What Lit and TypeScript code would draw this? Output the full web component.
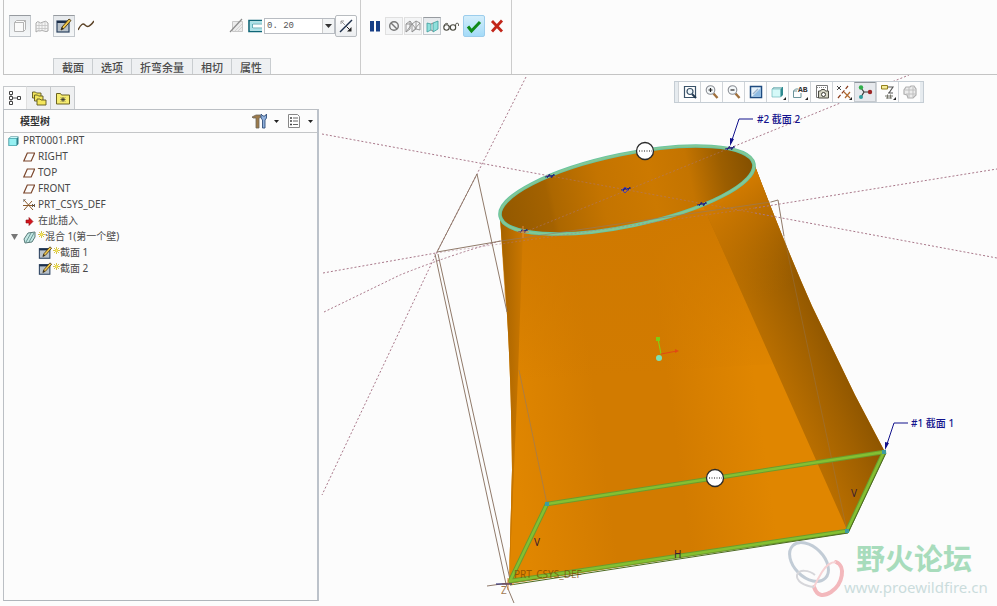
import { LitElement, html, svg, css, type TemplateResult } from "lit";
import { customElement, state } from "lit/decorators.js";
import { classMap } from "lit/directives/class-map.js";

const icon = (body: unknown, w = 16, h = 16) => html`<svg width=${w} height=${h} viewBox="0 0 ${w} ${h}" aria-hidden="true">${body}</svg>`;

const sketchShape = svg`<rect x="1" y="3" width="12" height="11" fill="#b9c2ca" stroke="#2b4260" stroke-width="1.200"/><path d="M1 4h12" stroke="#1c2f4a" stroke-width="2"/><path d="M5 12l1-3 7-8 2 1.500-7 8z" fill="#f2c94a" stroke="#4a3510" stroke-width=".9"/><path d="M5 12l1-3 1.500 1.500z" fill="#222"/>`;
const magnifier = svg`<path d="M9.500 9.500l4 4.500" stroke="#a0703c" stroke-width="2.400"/><circle cx="6.500" cy="6" r="4.300" fill="#f4f8fa" stroke="#8b8f95" stroke-width="1.100"/>`;
const moreMark = svg`<path d="M16 13v3h-3z" fill="#222"/>`;

const icons = {
  solid: icon(svg`<path d="M2.500 4.500h9v9h-9zM2.500 4.500l2-2h9v9l-2 2M11.500 4.500l2-2" fill="#fafafa" stroke="#b4b4b4"/>`),
  surface: icon(svg`<path d="M2 14V5q1-2 3-1 1 2 4 0t5 1v8q-2 1-4 0t-4 0q-2-1-4 1z" fill="#f5f5f5" stroke="#aaa"/><path d="M5 4v8M8 5v8M11 4v8M2 7.500h12M2 10.500h12" stroke="#c4c4c4" stroke-width=".8"/>`),
  sketch: icon(sketchShape),
  curve: icon(svg`<path d="M0 12c3-6 5-7 7-5s4 3 9-4" fill="none" stroke="#5b4226" stroke-width="1.400"/>`),
  hatch: icon(svg`<path d="M3.500 3.500h10v10h-10z" fill="#ececec" stroke="#c8c8c8"/><path d="M6 13l7-7M9 13l4-4" stroke="#d2d2d2"/><path d="M1 14L13 1" stroke="#8c8c8c" stroke-width="1.200"/>`),
  channel: icon(svg`<path d="M15 2.500H2v11H15" fill="#fff" stroke="#0f6677" stroke-width="1.600"/><path d="M15 4.500H4v7H15" fill="none" stroke="#a8e3ea" stroke-width="2"/><path d="M15 6H5.500v4H15" fill="#fff" stroke="#3f98a4" stroke-width=".8"/>`),
  flip: icon(svg`<path d="M2 14L14 2" stroke="#1c2f4a" stroke-width="1.500"/><path d="M3 3l4 4M3 6V3h3" stroke="#999" fill="none"/><path d="M8.500 8.500l4 4" stroke="#222"/><path d="M13.500 9v4.500H9z" fill="#222"/>`),
  pause: icon(svg`<path d="M3 3h4v10.500H3zM9 3h4v10.500H9z" fill="#173f86"/>`),
  none: icon(svg`<circle cx="8" cy="8" r="4.300" fill="none" stroke="#777" stroke-width="1.400"/><path d="M5 5l6 6" stroke="#777" stroke-width="1.400"/>`),
  attach: icon(svg`<path d="M1 6l4-3v8l-4 3zM7 6l4-3v8l-4 3zM11 3l4 2v7l-4-1M1 6l6 0M5 3l6 8M1 14l6-8M7 14l8-9" fill="none" stroke="#8f8f8f" stroke-width=".9"/>`),
  preview: icon(svg`<path d="M3 5l4 1v6l-4 2zM9 5l5-2v8l-5 3z" fill="#8fe0dc" stroke="#3c9c9c" stroke-width=".8"/><path d="M7 6l2-1M7 12l2 1" stroke="#888"/>`),
  glasses: icon(svg`<circle cx="3.500" cy="9.500" r="2.700" fill="none" stroke="#4a4a40" stroke-width="1.100"/><circle cx="10" cy="9.500" r="2.700" fill="none" stroke="#4a4a40" stroke-width="1.100"/><path d="M6 9q1-1 1.500 0M1 8.500Q2 4 5 6M12.500 8.500q0-5 3.200-2.500v2" fill="none" stroke="#4a4a40"/>`),
  accept: icon(svg`<path d="M2 8.500l3.500 4.500L14 4" fill="none" stroke="#0f8a18" stroke-width="3"/>`),
  cancel: icon(svg`<path d="M3 3l10 10.500M13 2.500L3 13.500" stroke="#c2261a" stroke-width="2.800"/>`),
  treeTab: icon(svg`<path d="M4 4v8M6 8h5" stroke="#555"/><g fill="#fff" stroke="#444"><path d="M2.500 1.500h3v3h-3zM2.500 6.500h3v3h-3zM2.500 11.500h3v3h-3zM10.500 6.500h3v3h-3z"/></g>`),
  folders: icon(svg`<g fill="#f3e65c" stroke="#5c5620" stroke-width=".9"><path d="M1.500 2h3l1 1H10v5H1.500z"/><path d="M3.500 5h3l1 1H12v5H3.500z"/><path d="M6 9h3l1 1h5v5H6z"/></g>`),
  favorite: icon(svg`<path d="M1.500 3.500h4l1 1.500H14.500v9h-13z" fill="#f6ec70" stroke="#6b6322"/><path d="M8 7v5M5.500 9.500h5M6 7.500l4 4M10 7.500l-4 4" stroke="#333" stroke-width=".8"/>`),
  settings: icon(svg`<path d="M0 4l4-2h4l1 2-2 1v10H4V5H1z" fill="#9c7a4a" stroke="#6d675c" stroke-width=".8"/><path d="M10.500 15V7L9 5V1l2 2h2l1.500-2v4L13 7v8z" fill="#8fb0dc" stroke="#33507c" stroke-width=".9"/>`),
  list: icon(svg`<path d="M2.500 1.500h9l2 2v11h-11z" fill="#fff" stroke="#888"/><path d="M7 5h5M7 8h5M7 11.500h5" stroke="#666"/><path d="M4 5h2M4 8h2M4 11.500h2" stroke="#444" stroke-width="1.500"/>`),
  part: icon(svg`<path d="M.5 3.500l2-2h8v7.500l-2 2h-8z" fill="#2e7f88"/><path d="M1 3.500h7.500v7H1z" fill="#96f0f2" stroke="#5bb4bb" stroke-width=".7"/><path d="M1.500 3l1.200-1H10l-1 1z" fill="#c9f8f8"/>`, 12, 12),
  plane: icon(svg`<path d="M.8 10h7.400l3.500-8H4.300z" fill="none" stroke="#7a452a" stroke-width="1.200"/>`, 12, 12),
  csys: icon(svg`<path d="M0 6.500h12M1 1l9 10M1 11l8-9" stroke="#8a5a2c"/><path d="M0 0v3M1 0l2 0M9 5l3 3M9 8l3-3" stroke="#333" stroke-width=".8"/>`, 13, 12),
  insert: icon(svg`<path d="M3 5h3V2.500l4 4-4 4V8H3z" fill="#d4141c" stroke="#8c0a10" stroke-width=".6"/>`, 12, 12),
  blend: icon(svg`<path d="M1 8l4-6 7-1v5l-3 5-7 1z" fill="#c4e8e4" stroke="#587a78"/><path d="M3 11l5-9M6 11l5-9" stroke="#5c8c8a" stroke-width=".9"/>`, 13, 13),
  star: icon(svg`<path d="M3.500 0v7M0 3.500h7M1 1l5 5M6 1L1 6" stroke="#d2be34" stroke-width=".9"/><path d="M2.500 2.500h2v2h-2z" fill="#fff36b"/>`, 7, 7),
  zoomFit: icon(svg`<path d="M2.500 2.500h11v11h-11z" fill="#fff" stroke="#3a5268" stroke-width="1.200"/><path d="M10 10l4 4" stroke="#22384f" stroke-width="2"/><circle cx="8" cy="7.500" r="3" fill="#eef6fa" stroke="#3a5268" stroke-width="1.200"/>`),
  zoomIn: icon(svg`${magnifier}<path d="M4.500 6h4M6.500 4v4" stroke="#222" stroke-width="1.200"/>`),
  zoomOut: icon(svg`${magnifier}<path d="M4.500 6h4" stroke="#222" stroke-width="1.200"/>`),
  repaint: icon(svg`<path d="M2.500 2.500h11v11h-11z" fill="#e6f2fb" stroke="#1f4b80" stroke-width="1.500"/><path d="M12.800 4v8.800H4z" fill="#8fbbe2"/><path d="M5 10l5-5" stroke="#9db4cc" stroke-width="1.500"/>`),
  display: icon(svg`<path d="M2 5l2-2h9v8l-2 2H2z" fill="#2f8a90"/><path d="M2 5h8.500v8H2z" fill="#d5f9f8" stroke="#6db8ba" stroke-width=".7"/><path d="M3 4.500l1.300-1h8l-1.300 1z" fill="#fff"/>${moreMark}`),
  views: icon(svg`<path d="M1.500 13.500V7l2-2h3M1.500 7H5M1.500 13.500H9V9" fill="none" stroke="#6c949a"/><text x="6" y="8" font-family="Liberation Mono" font-size="8" font-weight="700" fill="#333">AB</text>${moreMark}`),
  camera: icon(svg`<path d="M2.500 1.500h11v12h-11z" fill="#fff" stroke="#777"/><path d="M3 3.500h10" stroke="#888" stroke-dasharray="1 1"/><path d="M4.500 7h2l1-1.500h3L11.500 7h3v7h-10z" fill="#d4d4c4" stroke="#4b4b42"/><circle cx="9.500" cy="10.500" r="2" fill="#fff" stroke="#3b3b32"/>`),
  datums: icon(svg`<path d="M1 2l4 4M5 2L1 6" stroke="#444"/><path d="M2 14L12 2" stroke="#8a3c1c" stroke-dasharray="4 2" stroke-width="1.200"/><path d="M8 8l6 6M14 8l-5 6" stroke="#b06a30" stroke-width="1.200"/>${moreMark}`),
  spin: icon(svg`<path d="M4 4l3 4-3 5M7 8h6" fill="none" stroke="#3a3a3a" stroke-width="1.200"/><circle cx="4" cy="3.500" r="2.200" fill="#2fae4a"/><circle cx="13" cy="8" r="2.200" fill="#9c2626"/><circle cx="4" cy="13" r="2" fill="#2c9c9c"/>`),
  notes: icon(svg`<path d="M1.500 1.500h6v3.500h-6z" fill="#f6ec9a" stroke="#93811e"/><path d="M8 3h5L9 9h4M8 9h4" fill="none" stroke="#555" stroke-width="1.100"/><path d="M5 12h8M7.500 10.500v4M10.500 10.500v4M6 14h6" stroke="#77776c"/>${moreMark}`),
  globe: icon(svg`<path d="M4 3h4l1-1h3l2 3v6l-3 3H6l-1-3-3-1V6z" fill="#ececec" stroke="#b0b0b0" stroke-width="1.200"/><path d="M3 6h10M4 10h10M7 3v11M11 3v10" stroke="#c0c0c0"/>`),
};

type Node = { label: string; level: number; glyph: TemplateResult; open?: boolean; fresh?: boolean };

const sketchSmall = html`<svg width="15" height="14" viewBox="0 0 16 16" aria-hidden="true">${sketchShape}</svg>`;

const nodes: Node[] = [
  { label: "PRT0001.PRT", level: 0, glyph: icons.part },
  { label: "RIGHT", level: 1, glyph: icons.plane },
  { label: "TOP", level: 1, glyph: icons.plane },
  { label: "FRONT", level: 1, glyph: icons.plane },
  { label: "PRT_CSYS_DEF", level: 1, glyph: icons.csys },
  { label: "在此插入", level: 1, glyph: icons.insert },
  { label: "混合 1(第一个壁)", level: 1, glyph: icons.blend, open: true, fresh: true },
  { label: "截面 1", level: 2, glyph: sketchSmall, fresh: true },
  { label: "截面 2", level: 2, glyph: sketchSmall, fresh: true },
];

@customElement("dashboard-bar")
class DashboardBar extends LitElement {
  static styles = css`
    :host { display: flex; height: 74px; border-bottom: 1px solid #c4c4c4; border-left: 1px solid #c4c4c4; margin-left: 3px; }
    button { all: unset; box-sizing: border-box; display: grid; place-items: center; width: 18px; height: 18px; cursor: default; }
    .main { width: 357px; box-sizing: border-box; border-right: 1px solid #ccc; display: flex; flex-direction: column; justify-content: space-between; padding-top: 15px; }
    .run { border-right: 1px solid #ccc; padding: 15px 5px 0; }
    .row { display: flex; align-items: center; height: 22px; }
    .main .row { padding: 0 3px 0 5px; }
    .run .row { gap: 1px; }
    .big { width: 22px; height: 22px; }
    .pressed { border: 1px solid #c2c7cc; border-top-color: #979ba0; background: linear-gradient(#e6e9ec, #f5f7f8); }
    .boxed { background: #f4f5f6; border: 1px solid #e0e0e0; }
    .raised { border: 1px solid #b8bcc0; border-radius: 2px; background: linear-gradient(#fff, #eceef0); }
    .ok { margin: 0 2px; border: 1px solid #9ccdec; border-radius: 2px; background: linear-gradient(#d4eefb, #a4dbf8); }
    .end { margin-left: auto; display: flex; align-items: center; }
    .end > .opt { width: 18px; }
    .combo { display: flex; width: 71px; height: 16px; box-sizing: border-box; border: 1px solid #b8bcc2; background: #fff; }
    .combo input { flex: 1; min-width: 0; border: 0; padding: 0 2px; background: none; color: #555; font: 9px "Liberation Mono", monospace; outline: 0; }
    .drop { width: 12px; height: 14px; background: #f2f4f5; border-left: 1px solid #ccc; }
    .tabs { display: flex; margin-left: 49px; }
    .tabs button { width: auto; height: 16px; padding: 0 8px; border: 1px solid #c9cdd0; border-width: 1px 1px 0 0; background: #eef0f2; color: #4c4c4c; font: 500 11px "Noto Sans CJK SC", sans-serif; line-height: 14px; }
    .tabs button:first-child { border-left-width: 1px; }
  `;
  render() {
    return html`
      <div class="main">
        <div class="row">
          <button class="big pressed" aria-label="实体">${icons.solid}</button>
          <button class="big" aria-label="曲面">${icons.surface}</button>
          <button class="big pressed" aria-label="草绘截面">${icons.sketch}</button>
          <button class="big" aria-label="曲线">${icons.curve}</button>
          <div class="end">
            <button class="opt" aria-label="移除材料">${icons.hatch}</button>
            <button class="opt" aria-label="薄壁">${icons.channel}</button>
            <div class="combo">
              <input aria-label="厚度" value="0. 20" />
              <button class="drop" aria-label="厚度列表"><svg width="7" height="4"><path d="M0 0h7L3.500 4z" fill="#333" /></svg></button>
            </div>
            <button class="big raised" aria-label="反向">${icons.flip}</button>
          </div>
        </div>
        <nav class="tabs">${["截面", "选项", "折弯余量", "相切", "属性"].map((t) => html`<button>${t}</button>`)}</nav>
      </div>
      <div class="run">
        <div class="row">
          <button aria-label="暂停">${icons.pause}</button>
          <button class="boxed" aria-label="无预览">${icons.none}</button>
          <button class="boxed" aria-label="分离">${icons.attach}</button>
          <button class="pressed" aria-label="连接">${icons.preview}</button>
          <button aria-label="预览">${icons.glasses}</button>
          <button class="big ok" aria-label="确定">${icons.accept}</button>
          <button aria-label="取消">${icons.cancel}</button>
        </div>
      </div>`;
  }
}

@customElement("model-tree")
class ModelTree extends LitElement {
  @state() private selected = "";
  static styles = css`
    :host { display: flex; flex-direction: column; padding: 11px 1px 5px 3px; font: 10px "Noto Sans", "Noto Sans CJK SC", sans-serif; color: #484848; }
    button { all: unset; display: grid; place-items: center; cursor: default; }
    .tabs { display: flex; }
    .tabs button { box-sizing: border-box; width: 24px; height: 23px; border: 1px solid #c6c9cc; border-left-width: 0; border-bottom: 0; background: #eff0f1; }
    .tabs .active { border-left-width: 1px; background: #fcfcfc; border-right-color: #e0e0e0; }
    .panel { flex: 1; border: 1px solid #bbbfc4; border-right: 2px solid #bcc2ca; border-bottom: 1px solid #b0b5bb; }
    .head { display: flex; align-items: center; height: 22px; padding: 0 4px 0 16px; border-bottom: 1px solid #c4c6c8; }
    h2 { flex: 1; margin: 0; font-size: 10px; line-height: 20px; font-weight: 700; color: #333; }
    .head button { grid-auto-flow: column; gap: 6px; margin-left: 7px; }
    ul { list-style: none; margin: 0; padding: 0; }
    li { display: flex; align-items: center; height: 16px; line-height: 14px; padding-left: 4px; white-space: pre; }
    .slot { width: 15px; display: flex; align-items: center; }
    .mark { width: 7px; display: flex; align-self: flex-start; padding-top: 2px; }
    .name { align-self: flex-start; }
    li svg { display: block; }
  `;
  render() {
    return html`
      <div class="tabs">
        <button class="active" aria-label="模型树">${icons.treeTab}</button>
        <button aria-label="文件夹浏览器">${icons.folders}</button>
        <button aria-label="收藏夹">${icons.favorite}</button>
      </div>
      <section class="panel">
        <div class="head">
          <h2>模型树</h2>
          <button aria-label="设置">${icons.settings}<svg width="5" height="3"><path d="M0 0h5L2.500 3z" fill="#222" /></svg></button>
          <button aria-label="显示">${icons.list}<svg width="5" height="3"><path d="M0 0h5L2.500 3z" fill="#222" /></svg></button>
        </div>
        <ul>
          ${nodes.map((n) => html`
            <li class=${classMap({ chosen: this.selected === n.label })} @click=${() => (this.selected = n.label)}>
              ${n.level > 0 ? html`<span class="slot">${n.open ? html`<svg width="12" height="8" viewBox="0 0 12 8"><path d="M3 1h7L6.500 7z" fill="#777" /></svg>` : ""}</span>` : ""}
              ${n.level > 1 ? html`<span class="slot"></span>` : ""}
              <span class="slot">${n.glyph}</span>
              ${n.fresh ? html`<span class="mark">${icons.star}</span>` : ""}<span class="name">${n.label}</span>
            </li>`)}
        </ul>
      </section>`;
  }
}

@customElement("view-toolbar")
class ViewToolbar extends LitElement {
  static styles = css`
    :host { display: flex; box-sizing: border-box; height: 22px; border: 1px solid #c5cdd4; background: #fdfdfd; }
    .grip { width: 3px; background: #e6ebef; }
    button { all: unset; box-sizing: border-box; display: grid; place-items: center; width: 22px; border-left: 1px solid #d0d4d8; cursor: default; }
    .on { background: #e6e9ed; border: 1px solid #c4c9ce; border-top-color: #8f959b; }
  `;
  render() {
    const tools: [string, TemplateResult][] = [
      ["重新调整", icons.zoomFit], ["放大", icons.zoomIn], ["缩小", icons.zoomOut], ["重画", icons.repaint],
      ["显示样式", icons.display], ["已保存方向", icons.views], ["视图管理器", icons.camera], ["基准显示", icons.datums],
      ["旋转中心", icons.spin], ["注释显示", icons.notes], ["外观", icons.globe],
    ];
    return html`<span class="grip"></span>${tools.map(([label, glyph]) => html`<button class=${classMap({ on: label === "旋转中心" })} aria-label=${label}>${glyph}</button>`)}<span class="grip"></span>`;
  }
}

@customElement("model-view")
class ModelView extends LitElement {
  static styles = css`
    :host { position: relative; display: block; overflow: hidden; }
    view-toolbar { position: absolute; top: 6px; left: 354px; }
    .scene { display: block; width: 100%; height: auto; }
    .axis { fill: none; stroke: #a9788a; stroke-width: 1; stroke-dasharray: 2 2; }
    .wire { fill: none; stroke: #907a6a; stroke-width: 1; }
    .edge { fill: none; stroke: #6c9c2c; stroke-width: 4.5; stroke-linejoin: round; }
    .core { fill: none; stroke: #84c032; stroke-width: 2.5; stroke-linejoin: round; }
    .note { font: 500 10px "Noto Sans", "Noto Sans CJK SC", sans-serif; fill: #12128c; }
    .lead { fill: none; stroke: #12128c; }
    .tag { font: 10px "Noto Sans", sans-serif; fill: #3a1e30; }
    .csys { font: 10px "Noto Sans", sans-serif; fill: #7a4400; opacity: 0.7; }
    .brand { font: 700 29px "Noto Sans CJK SC", sans-serif; fill: #a8dcbc; }
    .site { font: 15px "Noto Sans", sans-serif; fill: #cbdcdc; }
  `;
  render() {
    const mark = (x: number, y: number) => svg`<g transform="translate(${x} ${y})" stroke="#24247c" fill="none"><path d="M-5 1L5-1M-3 2l3-4M1 2l3-4M-2-1l5 2"/></g>`;
    const handle = (x: number, y: number) => svg`<circle cx=${x} cy=${y} r="8.500" fill="#fff" stroke="#2a2a2a" stroke-width="1.300"/><path d="M${x - 6} ${y}h13" stroke="#666" stroke-width="1.500" stroke-dasharray="1 1.500"/>`;
    return html`
      <svg class="scene" viewBox="320 75 677 531" role="img" aria-label="混合特征模型">
        <defs>
          <linearGradient id="front" gradientUnits="userSpaceOnUse" x1="510" y1="420" x2="800" y2="380">
            <stop offset="0" stop-color="#e08600"/><stop offset=".3" stop-color="#d27b00"/><stop offset=".55" stop-color="#d27b00"/><stop offset=".85" stop-color="#e08600"/><stop offset="1" stop-color="#e08600"/>
          </linearGradient>
          <linearGradient id="frontTop" gradientUnits="userSpaceOnUse" x1="0" y1="220" x2="0" y2="380">
            <stop offset="0" stop-color="#cf7900"/><stop offset="1" stop-color="#cf7900" stop-opacity="0"/>
          </linearGradient>
          <linearGradient id="side" gradientUnits="userSpaceOnUse" x1="735" y1="275" x2="808" y2="243">
            <stop offset="0" stop-color="#b86e00"/><stop offset=".5" stop-color="#a06000"/><stop offset="1" stop-color="#855000"/>
          </linearGradient>
          <linearGradient id="sideTop" gradientUnits="userSpaceOnUse" x1="706" y1="205" x2="765" y2="300">
            <stop offset="0" stop-color="#d27b00"/><stop offset=".4" stop-color="#c47300" stop-opacity=".7"/><stop offset="1" stop-color="#b06a00" stop-opacity="0"/>
          </linearGradient>
          <linearGradient id="left" gradientUnits="userSpaceOnUse" x1="500" y1="0" x2="524" y2="0">
            <stop offset="0" stop-color="#a46200"/><stop offset="1" stop-color="#cc7800"/>
          </linearGradient>
          <linearGradient id="leftLow" gradientUnits="userSpaceOnUse" x1="0" y1="400" x2="0" y2="580">
            <stop offset="0" stop-color="#d47d00" stop-opacity="0"/><stop offset="1" stop-color="#d47d00"/>
          </linearGradient>
          <linearGradient id="inside" gradientUnits="userSpaceOnUse" x1="499" y1="0" x2="755" y2="0">
            <stop offset="0" stop-color="#935900"/><stop offset=".19" stop-color="#a46200"/><stop offset=".21" stop-color="#ac6700"/><stop offset=".4" stop-color="#c47400"/><stop offset=".6" stop-color="#cc7900"/><stop offset=".75" stop-color="#c47400"/><stop offset=".88" stop-color="#9c5e00"/><stop offset="1" stop-color="#845000"/>
          </linearGradient>
        </defs>

        <path d="M500 216L506 300Q511 370 512 470L509 584L848 532L885 452L855 395L812 306Q785 245 755 166L627 200z" fill="url(#front)"/>
        <path d="M500 216L505 300L518 380L773 364L708 210z" fill="url(#frontTop)"/>
        <path d="M500 216L506 300Q511 370 512 470L509 584L518 375L523 228z" fill="url(#left)"/>
        <path d="M500 216L506 300Q511 370 512 470L509 584L518 375L523 228z" fill="url(#leftLow)"/>
        <path d="M708 217L848 532L885 452L855 395L812 306Q785 245 755 166z" fill="url(#side)"/>
        <path d="M700 200L708 217L772 361L812 306Q785 245 755 166z" fill="url(#sideTop)"/>

        <g transform="rotate(-11.750 627 190)">
          <ellipse cx="627" cy="190" rx="129.500" ry="36" fill="url(#inside)" stroke="#66c4a2" stroke-width="3.600"/>
          <ellipse cx="627" cy="190" rx="129.500" ry="36" fill="none" stroke="#84c894" stroke-width="1.800"/>
        </g>

        <path class="axis" d="M322 134L550 176M755 213L997 258M323 273L436 253M755 208L997 169M324 312L400 275Q450 255 500 241M730 148L909 75M526 77L477 174L437 252L322 495"/>
        <path class="axis" opacity=".5" d="M550 176L755 213M525 232L730 148M436 253L755 208"/>
        <path class="wire" d="M501 241L437 252L477 174L507 312M435 254L506 584M438 254L511 584M506 584L514 603M771 202L778 200L784 236M487 586L530 580"/>
        <path class="wire" opacity=".6" d="M501 241L771 202M519 370L547 504"/>
        <path class="wire" opacity=".35" d="M784 236L847 531"/>

        <path class="edge" d="M510 581L547 504L884 452L847 531z"/>
        <path class="core" d="M510 581L547 504L884 452L847 531z"/>
        <path d="M510 585L848 533L886 453" fill="none" stroke="#4c6a20"/>
        <g fill="#3d9ca0"><path d="M545 502h4v4h-4zM882 450h4v4h-4zM845 529h4v4h-4z"/></g>

        ${mark(550, 176)}${mark(626, 189)}${mark(702, 204)}${mark(730, 148)}${mark(523, 231)}
        <path d="M622 190l3-3 3 3-3 3z" fill="none" stroke="#4a3cae"/>
        <path d="M518 232h11M523 226v12M502 584h12M508 578v12" stroke="#e08a3a"/>
        <path d="M496 584h16" stroke="#1d1d6c"/>
        ${handle(645, 151)}${handle(715, 478)}

        <path d="M661 354L658 339" stroke="#8ec814" stroke-width="1.200"/>
        <path d="M661 354L677 351" stroke="#e04a14" stroke-width="1.200"/>
        <path d="M656 337h4v4h-4z" fill="#7ccc14"/><path d="M675 349l4 2-4 2z" fill="#e04a14"/>
        <circle cx="659" cy="358" r="3" fill="#7ce0b4"/>

        <path class="lead" d="M753 119h-14l-8 24M908 423h-14l-8 24"/>
        <path d="M730 146l0-8 4 1zM885 450l0-8 4 1z" fill="#12128c"/>
        <text class="note" x="757" y="123">#2 截面 2</text>
        <text class="note" x="911" y="427">#1 截面 1</text>
        <text class="tag" x="534" y="546">V</text>
        <text class="tag" x="674" y="558">H</text>
        <text class="tag" x="851" y="497">V</text>
        <text class="csys" x="514" y="578">PRT_CSYS_DEF</text>
        <text class="csys" x="501" y="594">Z</text>

        <g fill="none">
          <ellipse cx="809" cy="562" rx="23" ry="15" transform="rotate(45 809 562)" stroke="#c2ccd6" stroke-width="3"/>
          <path d="M836 562c10 4 7 22-5 30-8 5-14 4-17-5" stroke="#f3b8bc" stroke-width="4" stroke-linecap="round"/>
          <path d="M836 562q-8 0-14 10-5 8-8 15" stroke="#f6d2d4" stroke-width="2"/>
          <path d="M814 587c-10-1-18-6-17-12 2-6 12-5 18 0" stroke="#d6d6da" stroke-width="2"/>
        </g>
        <text class="brand" x="856" y="570">野火论坛</text>
        <text class="site" x="844" y="593">www.proewildfire.cn</text>
      </svg>
      <view-toolbar></view-toolbar>`;
  }
}

@customElement("app-root")
class AppRoot extends LitElement {
  static styles = css`
    :host { display: flex; flex-direction: column; min-height: 100vh; background: #fcfcfc; }
    .work { flex: 1; display: grid; grid-template-columns: 320px minmax(0, 1fr); }
  `;
  render() {
    return html`<dashboard-bar></dashboard-bar><main class="work"><model-tree></model-tree><model-view></model-view></main>`;
  }
}
